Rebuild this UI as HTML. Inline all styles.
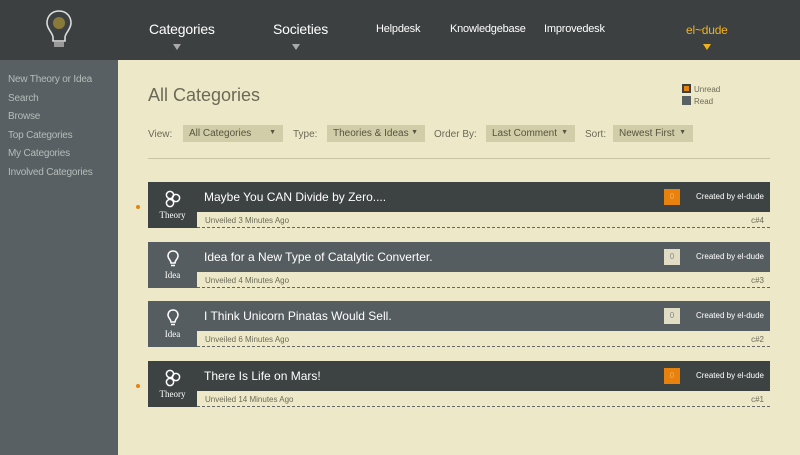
<!DOCTYPE html>
<html><head><meta charset="utf-8"><style>
*{margin:0;padding:0;box-sizing:border-box}
body{width:800px;height:455px;overflow:hidden;background:#ede9c8;font-family:"Liberation Sans",sans-serif;position:relative}
.hdr{position:absolute;left:0;top:0;width:800px;height:60px;background:#3c4041}
.nav{position:absolute;color:#fff;font-size:11px;top:23px;letter-spacing:-0.2px}
.nav.big{font-size:14px;top:21px}
.tri{position:absolute;width:0;height:0;border-left:4px solid transparent;border-right:4px solid transparent;border-top:6px solid #aaa}
.side{position:absolute;left:0;top:60px;width:118px;height:395px;background:#586063}
.side div{color:#b6bcb9;font-size:10px;height:18.5px;padding-left:8px;letter-spacing:-0.2px}
.t{position:absolute;color:#6b6a58}
.sel{position:absolute;top:125px;height:17px;background:#d1cda8;color:#55543f;font-size:10px;padding:3px 6px}
.sel:after{content:"▼";position:absolute;right:7px;top:4px;font-size:7px}
.row{position:absolute;left:148px;width:622px;height:46px}
.top{position:absolute;left:0;top:0;width:622px;height:30px}
.ico{position:absolute;left:0;top:0;width:49px;height:46px;color:#fff;font-family:"Liberation Serif",serif;font-size:9px;text-align:center}
.ico svg{display:block;margin:8px auto 2px}
.ttl{position:absolute;left:56px;top:8px;color:#fff;font-size:12px}
.sub{position:absolute;left:49px;top:30px;width:573px;height:16px;border-bottom:1px dashed #666;font-size:8px;color:#6b6a58;padding:4px 0 0 8px}
.sub span{position:absolute;right:6px;top:4px}
.bd{position:absolute;left:516px;top:7px;width:16px;height:16px;font-size:8px;text-align:center;line-height:16px}
.cr{position:absolute;right:6px;top:10px;color:#fff;font-size:8px}
.dot{position:absolute;left:136px;width:4px;height:4px;border-radius:2px;background:#e8820c}
</style></head><body>
<div class="hdr">
<svg style="position:absolute;left:44px;top:9px" width="30" height="42" viewBox="0 0 30 42"><path d="M15 2C7 2 3 8 3 14c0 6 5 9 6 14v4h12v-4c1-5 6-8 6-14C27 8 23 2 15 2z" fill="none" stroke="#ddd" stroke-width="1.6"/><circle cx="15" cy="14" r="6" fill="#8a7a3a"/><rect x="10" y="33" width="10" height="5" fill="#999"/></svg>
<div class="nav big" style="left:149px">Categories</div><div class="tri" style="left:173px;top:44px"></div>
<div class="nav big" style="left:273px">Societies</div><div class="tri" style="left:292px;top:44px"></div>
<div class="nav" style="left:376px">Helpdesk</div>
<div class="nav" style="left:450px">Knowledgebase</div>
<div class="nav" style="left:544px">Improvedesk</div>
<div class="nav" style="left:686px;color:#f2b21c;font-size:12px">el~dude</div><div class="tri" style="left:703px;top:44px;border-top-color:#f2b21c"></div>
</div>
<div class="side" style="padding-top:14px"><div>New Theory or Idea</div><div>Search</div><div>Browse</div><div>Top Categories</div><div>My Categories</div><div>Involved Categories</div></div>
<div class="t" style="left:148px;top:85px;font-size:18px">All Categories</div>
<div style="position:absolute;left:682px;top:84px;width:9px;height:9px;background:#3c4041"><div style="margin:2px;width:5px;height:5px;background:#e8820c"></div></div>
<div class="t" style="left:694px;top:85px;font-size:8px">Unread</div>
<div style="position:absolute;left:682px;top:96px;width:9px;height:9px;background:#586063"></div>
<div class="t" style="left:694px;top:97px;font-size:8px">Read</div>
<div class="t" style="left:148px;top:129px;font-size:10px">View:</div><div class="sel" style="left:183px;width:100px">All Categories</div>
<div class="t" style="left:293px;top:129px;font-size:10px">Type:</div><div class="sel" style="left:327px;width:98px">Theories &amp; Ideas</div>
<div class="t" style="left:434px;top:129px;font-size:10px">Order By:</div><div class="sel" style="left:486px;width:89px">Last Comment</div>
<div class="t" style="left:585px;top:129px;font-size:10px">Sort:</div><div class="sel" style="left:613px;width:80px">Newest First</div>
<div style="position:absolute;left:148px;top:158px;width:622px;height:1px;background:#c8c4a4"></div>

<div class="dot" style="top:205px"></div>
<div class="row" style="top:182px"><div class="top" style="background:#3d4242"></div><div class="ico" style="background:#3d4242"><svg width="16" height="18" viewBox="0 0 16 18" fill="none" stroke="#fff" stroke-width="1.5"><circle cx="5" cy="5" r="3.6"/><circle cx="11" cy="8" r="3.6"/><circle cx="5" cy="13" r="3.6"/></svg>Theory</div><div class="ttl">Maybe You CAN Divide by Zero....</div><div class="bd" style="background:#e8820c;color:#f5b060">0</div><div class="cr">Created by el-dude</div><div class="sub">Unveiled 3 Minutes Ago<span>c#4</span></div></div>
<div class="row" style="top:242px"><div class="top" style="background:#565d60"></div><div class="ico" style="background:#565d60"><svg width="12" height="18" viewBox="0 0 12 18" fill="none" stroke="#fff" stroke-width="1.5"><path d="M6 1C3 1 1 3 1 6c0 3 3 4 3 7h4c0-3 3-4 3-7 0-3-2-5-5-5z"/><path d="M4 15.5h4"/></svg>Idea</div><div class="ttl">Idea for a New Type of Catalytic Converter.</div><div class="bd" style="background:#e1ddc4;color:#888">0</div><div class="cr">Created by el-dude</div><div class="sub">Unveiled 4 Minutes Ago<span>c#3</span></div></div>
<div class="row" style="top:301px"><div class="top" style="background:#565d60"></div><div class="ico" style="background:#565d60"><svg width="12" height="18" viewBox="0 0 12 18" fill="none" stroke="#fff" stroke-width="1.5"><path d="M6 1C3 1 1 3 1 6c0 3 3 4 3 7h4c0-3 3-4 3-7 0-3-2-5-5-5z"/><path d="M4 15.5h4"/></svg>Idea</div><div class="ttl">I Think Unicorn Pinatas Would Sell.</div><div class="bd" style="background:#e1ddc4;color:#888">0</div><div class="cr">Created by el-dude</div><div class="sub">Unveiled 6 Minutes Ago<span>c#2</span></div></div>
<div class="dot" style="top:384px"></div>
<div class="row" style="top:361px"><div class="top" style="background:#3d4242"></div><div class="ico" style="background:#3d4242"><svg width="16" height="18" viewBox="0 0 16 18" fill="none" stroke="#fff" stroke-width="1.5"><circle cx="5" cy="5" r="3.6"/><circle cx="11" cy="8" r="3.6"/><circle cx="5" cy="13" r="3.6"/></svg>Theory</div><div class="ttl">There Is Life on Mars!</div><div class="bd" style="background:#e8820c;color:#f5b060">0</div><div class="cr">Created by el-dude</div><div class="sub">Unveiled 14 Minutes Ago<span>c#1</span></div></div>
</body></html>
